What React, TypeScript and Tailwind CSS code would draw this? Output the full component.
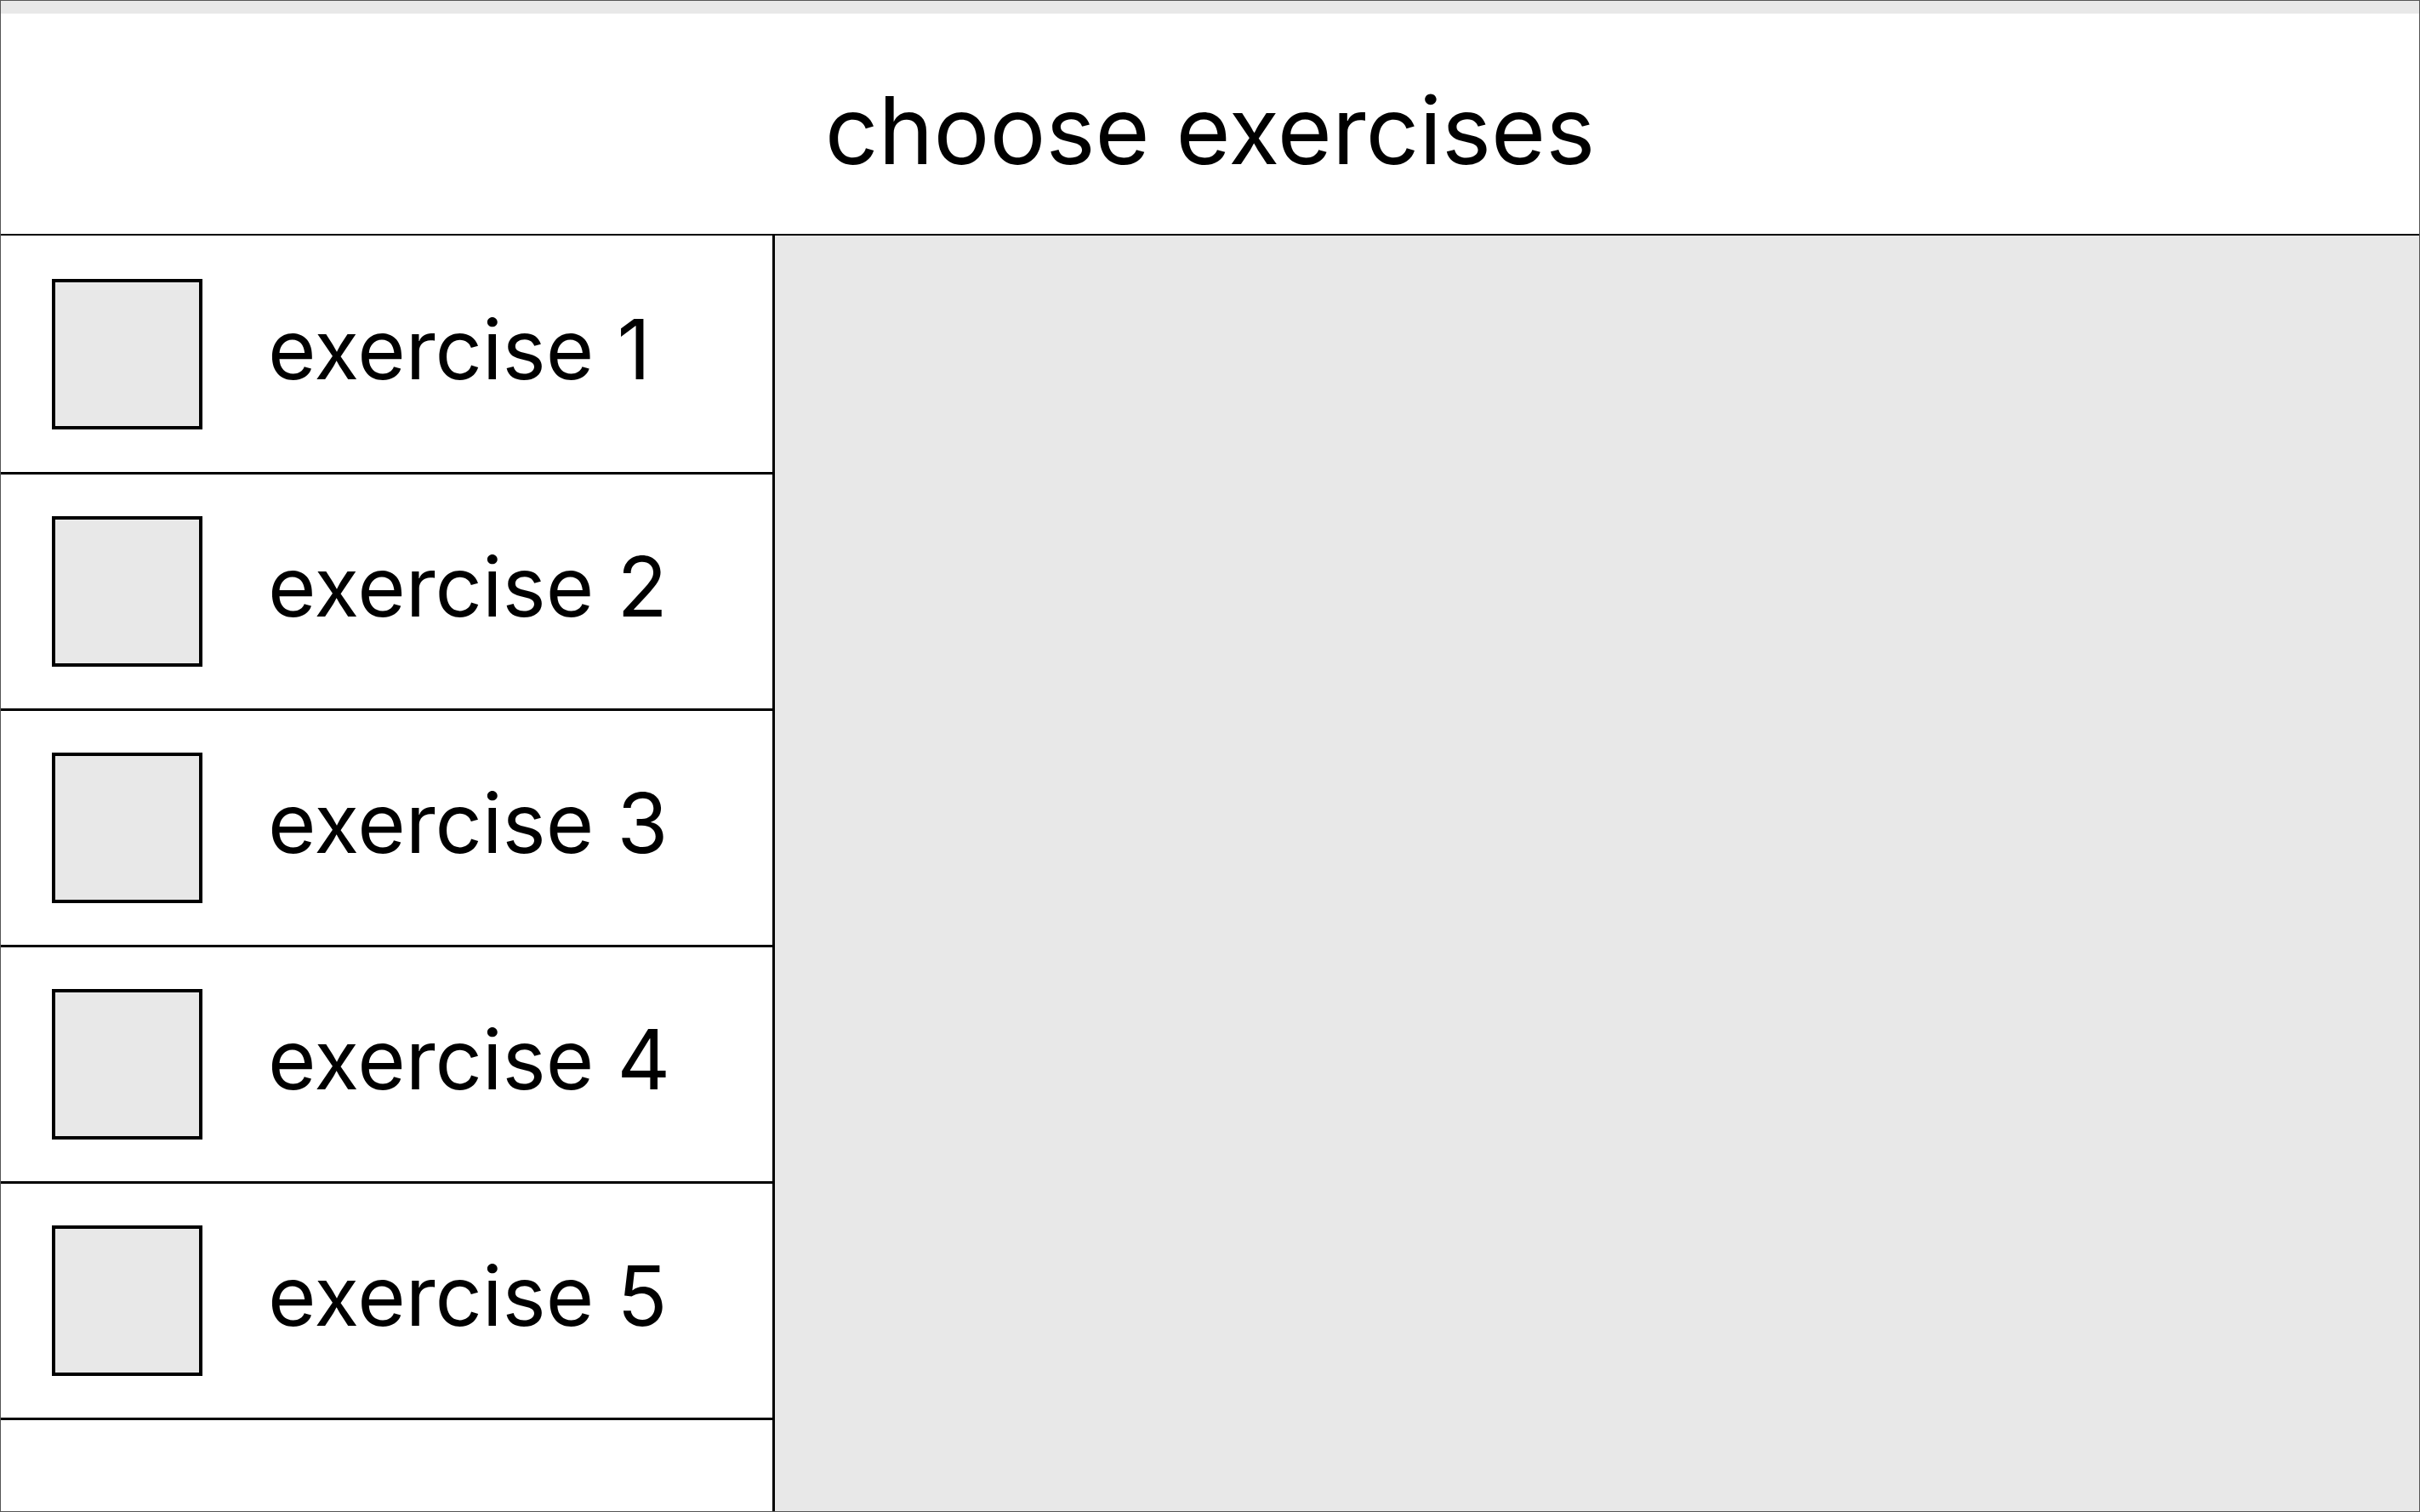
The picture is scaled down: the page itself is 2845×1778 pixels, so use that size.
const exercises = ["exercise 1", "exercise 2", "exercise 3", "exercise 4", "exercise 5"];

const ExerciseRow = ({ label, first }: { label: string; first?: boolean }) => {
  return (
    <div
      className={`flex shrink-0 items-center border-b-[3px] border-black pl-[60px] ${
        first ? "h-[281px]" : "h-[278px]"
      }`}
    >
      <div className="h-[177px] w-[177px] border-4 border-black bg-[#e8e8e8]" />
      <span className="mb-[12px] ml-[77px] text-[97px] leading-none text-black">{label}</span>
    </div>
  );
};

export default function App() {
  return (
    <div
      className="flex h-[1778px] w-[2845px] flex-col overflow-hidden border border-[#555] bg-white"
      style={{ fontFamily: "Inter, 'Noto Sans', sans-serif" }}
    >
      {/* top strip */}
      <div className="h-[15px] shrink-0 bg-[#e8e8e8]" />

      {/* header */}
      <div className="flex h-[261px] shrink-0 items-center justify-center border-b-2 border-black pt-[14px]">
        <h1 className="text-[110px] font-normal leading-none text-black">choose exercises</h1>
      </div>

      {/* body */}
      <div className="flex min-h-0 flex-1">
        <div className="flex w-[910px] shrink-0 flex-col border-r-[3px] border-black bg-white">
          {exercises.map((ex, i) => (
            <ExerciseRow key={ex} label={ex} first={i === 0} />
          ))}
        </div>
        <div className="flex-1 bg-[#e8e8e8]" />
      </div>
    </div>
  );
}
